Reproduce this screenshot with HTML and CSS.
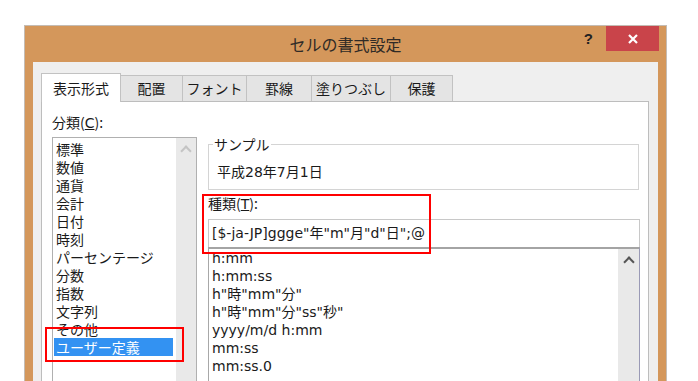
FILE: index.html
```html
<!DOCTYPE html>
<html lang="ja">
<head>
    <meta charset="UTF-8">
    <title>セルの書式設定</title>
    <link rel="stylesheet" href="styles.css">
</head>
<body>
    <div class="window">
        <div class="titlebar">
            <span></span>
            <span class="title">セルの書式設定</span>
            <div class="controls">
                <span class="help">?</span>
                <span class="close">
                    <svg width="12" height="12" viewBox="0 0 12 12">
                        <path d="M2 2L10 10M10 2L2 10" stroke="#fff" stroke-width="2.2" fill="none" />
                    </svg>
                </span>
            </div>
        </div>
        <div class="client">
            <div class="tabs">
                <div class="tab active">表示形式</div>
                <div class="tab w62">配置</div>
                <div class="tab w64">フォント</div>
                <div class="tab w65">罫線</div>
                <div class="tab w79">塗りつぶし</div>
                <div class="tab w62">保護</div>
            </div>
            <div class="panel">
                <div class="col-left">
                    <div class="label">分類(<u>C</u>):</div>
                    <div class="catlist">
                        <ul class="items">
                            <li>標準</li>
                            <li>数値</li>
                            <li>通貨</li>
                            <li>会計</li>
                            <li>日付</li>
                            <li>時刻</li>
                            <li>パーセンテージ</li>
                            <li>分数</li>
                            <li>指数</li>
                            <li>文字列</li>
                            <li>その他</li>
                            <li class="selected">ユーザー定義</li>
                        </ul>
                        <div class="vscroll"><span class="arrow light"></span></div>
                    </div>
                </div>
                <div class="col-right">
                    <fieldset class="sample">
                        <legend>サンプル</legend>
                        <div class="sample-value">平成28年7月1日</div>
                    </fieldset>
                    <div class="label">種類(<u>T</u>):</div>
                    <div class="input">[$-ja-JP]ggge"年"m"月"d"日";@</div>
                    <div class="fmtlist">
                        <ul class="items">
                            <li>h:mm</li>
                            <li>h:mm:ss</li>
                            <li>h"時"mm"分"</li>
                            <li>h"時"mm"分"ss"秒"</li>
                            <li>yyyy/m/d h:mm</li>
                            <li>mm:ss</li>
                            <li>mm:ss.0</li>
                        </ul>
                        <div class="vscroll"><span class="arrow"></span></div>
                    </div>
                </div>
                <div class="mark mark-left"></div>
                <div class="mark mark-right"></div>
            </div>
        </div>
    </div>
</body>
</html>
```

FILE: styles.css
```css
body {
    margin: 0;
    padding: 0;
    background-color: #fff;
    color: #1a1a1a;
    font-family: "DejaVu Sans", "Noto Sans CJK JP", sans-serif;
    font-size: 14px;
    overflow: hidden;
}

.window {
    margin: 25px 0 0 24px;
    width: 643px;
    height: 360px;
    box-sizing: border-box;
    border: 1px solid #c4bcb4;
    border-bottom: none;
    background-color: #d4975b;
    overflow: hidden;
}

.titlebar {
    height: 36px;
    display: grid;
    grid-template-columns: 1fr auto 1fr;
}

.title {
    font-family: "Noto Sans CJK JP", sans-serif;
    font-size: 16px;
    line-height: 36px;
    color: #2f2a26;
}

.controls {
    display: flex;
    justify-content: flex-end;
    align-items: flex-start;
}

.help {
    font-family: "Liberation Sans", sans-serif;
    font-weight: bold;
    font-size: 15px;
    line-height: 26px;
    color: #222;
    margin-right: 13px;
}

.close {
    width: 53px;
    height: 25px;
    margin-right: 7px;
    background-color: #c9444a;
    display: flex;
    align-items: center;
    justify-content: center;
}

.client {
    margin: 0 8px;
    padding: 11px 9px 0 8px;
    background-color: #efefef;
    height: 400px;
}

.tabs {
    display: flex;
    align-items: flex-end;
    height: 28px;
}

.tab {
    box-sizing: border-box;
    height: 26px;
    border-top: 1px solid #c2c2c2;
    border-right: 1px solid #c2c2c2;
    background-color: #e4e4e4;
    font-family: "Noto Sans CJK JP", sans-serif;
    text-align: center;
    line-height: 25px;
}

.tab.active {
    width: 80px;
    height: 29px;
    margin-bottom: -1px;
    border-left: 1px solid #c2c2c2;
    background-color: #fff;
    line-height: 29px;
    position: relative;
    z-index: 1;
}

.w62 { width: 62px; }
.w64 { width: 64px; }
.w65 { width: 65px; }
.w79 { width: 79px; }

.panel {
    position: relative;
    display: flex;
    gap: 11px;
    height: 320px;
    padding: 11px 8px 0 10px;
    border: 1px solid #bdbdbd;
    background-color: #fff;
}

.label {
    line-height: 18px;
    font-family: "Noto Sans CJK JP", sans-serif;
}

.label u {
    font-family: "DejaVu Sans", sans-serif;
}

.items {
    list-style: none;
    margin: 0;
    padding: 0;
    flex: 1;
}

.items li {
    line-height: 18px;
    white-space: nowrap;
}

.vscroll {
    width: 20px;
    background-color: #e9e9e9;
    display: flex;
    justify-content: center;
}

.arrow {
    width: 6px;
    height: 6px;
    margin-top: 9px;
    border-top: 2px solid #555;
    border-left: 2px solid #555;
    transform: rotate(45deg);
}

.arrow.light {
    border-color: #c4c4c4;
}

/* left column */
.col-left {
    width: 145px;
}

.catlist {
    margin-top: 5px;
    height: 260px;
    display: flex;
    border: 1px solid #b0b0b0;
    font-family: "Noto Sans CJK JP", sans-serif;
}

.catlist .items {
    padding: 2px 3px 0 1px;
}

.catlist .items li {
    padding-left: 2px;
}

.catlist .items li.selected {
    background-color: #3392f2;
    color: #fff;
}

/* right column */
.col-right {
    width: 432px;
    margin-top: 22px;
}

.sample {
    margin: 0;
    padding: 0 8px 8px 4px;
    border: 1px solid #d4d4d4;
    width: 431px;
    box-sizing: border-box;
}

.sample legend {
    padding: 0 1px;
    line-height: 18px;
    font-family: "Noto Sans CJK JP", sans-serif;
}

.sample-value {
    margin: 10px 0 0 4px;
    line-height: 18px;
}

.col-right .label {
    margin-top: 4px;
}

.input {
    margin-top: 6px;
    height: 28px;
    box-sizing: border-box;
    border: 1px solid #c8c8c8;
    border-bottom: none;
    padding-left: 3px;
    line-height: 27px;
}

.fmtlist {
    display: flex;
    height: 140px;
    border-top: 2px solid #a4a4a4;
    border-left: 1px solid #a8a8a8;
    border-right: 1px solid #9a9ab6;
}

.fmtlist .items {
    padding-left: 3px;
}

.fmtlist .vscroll {
    width: 21px;
}

/* annotations */
.mark {
    position: absolute;
    border: 2px solid #ff0000;
    box-sizing: border-box;
}

.mark-left {
    left: 3px;
    top: 225px;
    width: 139px;
    height: 35px;
}

.mark-right {
    left: 160px;
    top: 92px;
    width: 229px;
    height: 60px;
}
```
